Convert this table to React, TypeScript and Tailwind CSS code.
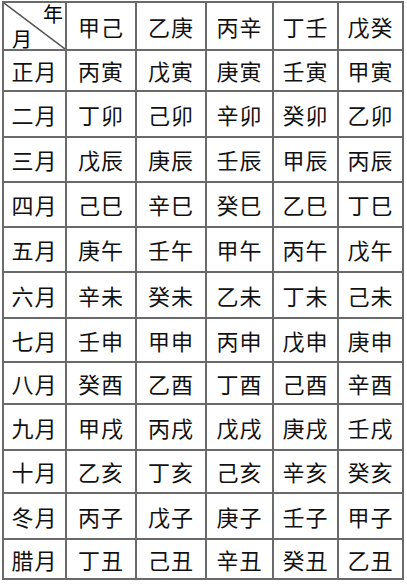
import React from "react";

const stems = ["甲己", "乙庚", "丙辛", "丁壬", "戊癸"];

const rows: [string, string[]][] = [
  ["正月", ["丙寅", "戊寅", "庚寅", "壬寅", "甲寅"]],
  ["二月", ["丁卯", "己卯", "辛卯", "癸卯", "乙卯"]],
  ["三月", ["戊辰", "庚辰", "壬辰", "甲辰", "丙辰"]],
  ["四月", ["己巳", "辛巳", "癸巳", "乙巳", "丁巳"]],
  ["五月", ["庚午", "壬午", "甲午", "丙午", "戊午"]],
  ["六月", ["辛未", "癸未", "乙未", "丁未", "己未"]],
  ["七月", ["壬申", "甲申", "丙申", "戊申", "庚申"]],
  ["八月", ["癸酉", "乙酉", "丁酉", "己酉", "辛酉"]],
  ["九月", ["甲戌", "丙戌", "戊戌", "庚戌", "壬戌"]],
  ["十月", ["乙亥", "丁亥", "己亥", "辛亥", "癸亥"]],
  ["冬月", ["丙子", "戊子", "庚子", "壬子", "甲子"]],
  ["腊月", ["丁丑", "己丑", "辛丑", "癸丑", "乙丑"]],
];

const Cell = ({ text }: { text: string }) => (
  <div className="bg-white flex items-center justify-center text-[22px] text-[#111] tracking-[1px]">
    {text}
  </div>
);

export default function App() {
  return (
    <div
      className="w-[407px] h-[585px] bg-white pt-[1px] pl-[2px]"
      style={{ fontFamily: '"Noto Sans CJK SC", "Noto Sans", sans-serif' }}
    >
      <div className="inline-grid grid-cols-[61px_68px_68px_65px_63px_63px] grid-rows-[46px_39px_44px_43px_43px_43px_44px_42px_40px_44px_41px_44px_38px] gap-[2px] p-[2px] bg-[#6a6a6a]">
        <div className="relative bg-white flex flex-col justify-between pl-[8px] pr-[2px] pt-[1px] leading-none">
          <svg className="absolute inset-0 w-full h-full" viewBox="0 0 61 46" preserveAspectRatio="none">
            <line x1="0" y1="0" x2="61" y2="46" stroke="#555" strokeWidth="1.5" />
          </svg>
          <span className="self-end text-[20px]">年</span>
          <span className="self-start text-[20px]">月</span>
        </div>
        {stems.map((s) => (
          <Cell key={s} text={s} />
        ))}
        {rows.map(([month, cells]) => (
          <React.Fragment key={month}>
            <Cell text={month} />
            {cells.map((c) => (
              <Cell key={c} text={c} />
            ))}
          </React.Fragment>
        ))}
      </div>
    </div>
  );
}
